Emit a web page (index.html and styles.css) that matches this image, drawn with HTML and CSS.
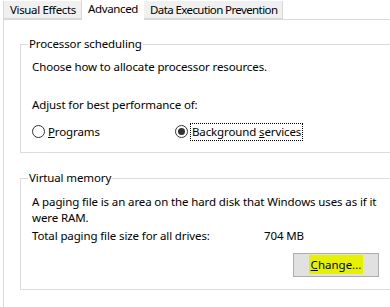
FILE: index.html
```html
<!DOCTYPE html>
<html lang="en">
<head>
    <meta charset="UTF-8">
    <title>Performance Options</title>
    <link rel="stylesheet" href="styles.css">
</head>
<body>

<div class="tabs">
    <div class="tab">Visual Effects</div>
    <div class="tab active">Advanced</div>
    <div class="tab dep">Data Execution Prevention</div>
</div>

<div class="panel">
    <fieldset class="group">
        <legend>Processor scheduling</legend>
        <p class="line">Choose how to allocate processor resources.</p>
        <p class="line adjust">Adjust for best performance of:</p>
        <div class="radios">
            <label class="radio">
                <span class="dot"></span>
                <span><u>P</u>rograms</span>
            </label>
            <label class="radio checked">
                <span class="dot"></span>
                <span class="focus">Background <u>s</u>ervices</span>
            </label>
        </div>
    </fieldset>

    <fieldset class="group memory">
        <legend>Virtual memory</legend>
        <p class="line">A paging file is an area on the hard disk that Windows uses as if it<br>were RAM.</p>
        <div class="line total">
            <span class="total-label">Total paging file size for all drives:</span>
            <span>704 MB</span>
        </div>
        <div class="actions">
            <button class="btn"><span class="mark"><u>C</u>hange...</span></button>
        </div>
    </fieldset>
</div>

</body>
</html>
```

FILE: styles.css
```css
body {
    font-family: "Noto Sans", sans-serif;
    font-size: 11.5px;
    letter-spacing: -0.12px;
    line-height: 16px;
    color: #000;
    background: #fff;
    margin: 0;
    overflow: hidden;
}
.tabs {
    display: flex;
    align-items: flex-end;
    height: 20px;
    padding-left: 3px;
    position: relative;
    z-index: 1;
    letter-spacing: -0.35px;
}
.tab {
    height: 17px;
    padding: 0 5px 0 6px;
    background: #f0f0f0;
    border: 1px solid #d9d9d9;
    border-top: none;
    border-right: none;
    line-height: 17px;
    margin-bottom: 1px;
}
.tab.dep {
    border-right: 1px solid #d9d9d9;
    letter-spacing: -0.6px;
}
.tab.active {
    height: 20px;
    line-height: 18px;
    background: #fff;
    border-bottom: none;
    margin-bottom: 0;
    padding: 0 6px;
}
.tab.active + .tab {
    border-left: none;
}
.panel {
    width: 420px;
    margin-top: -1px;
    margin-left: 3px;
    border: 1px solid #d9d9d9;
    padding: 16px 0 20px 16px;
}
.group {
    margin: 0;
    border: 1px solid #dcdcdc;
    padding: 7px 11px 12px;
}
.group legend {
    padding: 0 1px;
    margin-left: -4px;
}
.line {
    margin: 0;
}
.adjust {
    margin-top: 22px;
}
.radios {
    display: flex;
    margin-top: 10px;
    height: 17px;
    align-items: center;
}
.radio {
    display: flex;
    align-items: center;
    gap: 3px;
    width: 143px;
}
.dot {
    width: 11px;
    height: 11px;
    border: 1px solid #333;
    border-radius: 50%;
    position: relative;
    box-sizing: content-box;
}
.checked .dot::after {
    content: "";
    position: absolute;
    left: 2px;
    top: 2px;
    width: 7px;
    height: 7px;
    border-radius: 50%;
    background: #333;
}
.focus {
    outline: 1px dotted #000;
    padding: 0 1px;
}
.memory {
    margin-top: 17px;
    padding-top: 8px;
    padding-bottom: 12px;
}
.total {
    display: flex;
    margin-top: 2px;
}
.total-label {
    width: 232px;
}
.actions {
    display: flex;
    margin-top: 9px;
    padding-left: 261px;
}
.btn {
    font: inherit;
    width: 86px;
    height: 24px;
    background: #e1e1e1;
    border: 1px solid #adadad;
    padding: 0;
    color: #000;
}
.mark {
    background: #e6f000;
    padding: 2px 2px;
}
```
